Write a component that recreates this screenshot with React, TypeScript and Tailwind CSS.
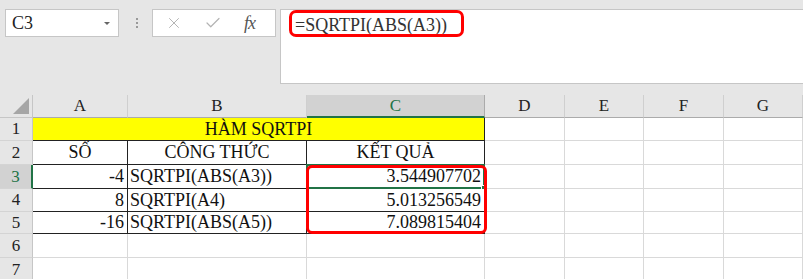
import { X, Check } from "lucide-react";

const cols = [
  { key: "A", w: "w-[95px]" },
  { key: "B", w: "w-[179px]" },
  { key: "C", w: "w-[178px]" },
  { key: "D", w: "w-[80px]" },
  { key: "E", w: "w-[79px]" },
  { key: "F", w: "w-[80px]" },
  { key: "G", w: "w-[79px]" },
];

const rows = [
  { n: 2, h: "h-[24px]", a: "SỐ", b: "CÔNG THỨC", c: "KẾT QUẢ", head: true },
  { n: 3, h: "h-[24px]", a: "-4", b: "SQRTPI(ABS(A3))", c: "3.544907702" },
  { n: 4, h: "h-[23px]", a: "8", b: "SQRTPI(A4)", c: "5.013256549" },
  { n: 5, h: "h-[22px]", a: "-16", b: "SQRTPI(ABS(A5))", c: "7.089815404" },
];

function RowHead({ n, h, active }: { n: number; h: string; active?: boolean }) {
  return (
    <div
      className={`${h} w-[33px] shrink-0 flex items-center justify-center border-b border-[#d4d4d4] text-[17px] ${
        active ? "bg-[#d2d2d2] text-[#217346] border-r-2 border-r-[#217346]" : "border-r border-r-[#c6c6c6] text-[#222]"
      }`}
    >
      {n}
    </div>
  );
}

function Empty({ w, h }: { w: string; h: string }) {
  return <div className={`${w} ${h} shrink-0 bg-white border-r border-b border-[#d9d9d9]`} />;
}

export default function App() {
  return (
    <div
      className="relative w-[803px] h-[279px] overflow-hidden bg-[#e6e6e6] text-[#111]"
      style={{ fontFamily: '"Liberation Serif", "Times New Roman", serif' }}
    >
      {/* formula toolbar */}
      <div className="flex h-[95px] pt-[9px]">
        <div className="ml-[5px] w-[114px] h-[28px] bg-white border border-[#c6c6c6] flex items-center justify-between pl-[6px] pr-[8px]">
          <span className="text-[18px] text-[#222]">C3</span>
          <span className="w-0 h-0 border-l-[3px] border-r-[3px] border-t-[3px] border-l-transparent border-r-transparent border-t-[#666]" />
        </div>
        <div className="ml-[16px] w-[3px] h-[28px] flex flex-col items-center justify-center gap-[2px]">
          <span className="w-[2px] h-[2px] bg-[#999]" />
          <span className="w-[2px] h-[2px] bg-[#999]" />
          <span className="w-[2px] h-[2px] bg-[#999]" />
        </div>
        <div className="ml-[14px] w-[124px] h-[28px] bg-white border border-[#c6c6c6] flex items-center pl-[12px] gap-[21px]">
          <X size={18} strokeWidth={1.3} className="text-[#b3b3b3]" />
          <Check size={18} strokeWidth={1.6} className="text-[#b3b3b3]" />
          <span className="ml-[1px] italic text-[18px] text-[#555] tracking-[-1px]">fx</span>
        </div>
        <div className="ml-[4px] flex-1 h-[75px] bg-white border-t border-b border-l border-[#c6c6c6] pl-[14px] pt-[2px]">
          <span className="text-[18px] text-[#333]">=SQRTPI(ABS(A3))</span>
        </div>
      </div>

      {/* column headers */}
      <div className="flex h-[23px]">
        <div className="w-[33px] h-[23px] shrink-0 border-r border-b border-[#c6c6c6] flex items-end justify-end pr-[3px] pb-[3px]">
          <div className="w-[16px] h-[16px] bg-[#a6a6a6] [clip-path:polygon(100%_0,100%_100%,0_100%)]" />
        </div>
        {cols.map((c) => (
          <div
            key={c.key}
            className={`${c.w} h-[23px] shrink-0 flex items-center justify-center text-[17px] ${
              c.key === "C"
                ? "bg-[#d2d2d2] text-[#217346] border-b-2 border-b-[#217346] border-r border-r-[#ababab]"
                : "border-b border-b-[#ababab] border-r border-r-[#cfcfcf] text-[#222]"
            }`}
          >
            {c.key}
          </div>
        ))}
      </div>

      {/* row 1 */}
      <div className="flex">
        <RowHead n={1} h="h-[23px]" />
        <div className="w-[452px] h-[23px] shrink-0 bg-[#ffff00] border-r border-b border-[#222] flex items-center justify-center text-[18px]">
          HÀM SQRTPI
        </div>
        {cols.slice(3).map((c) => (
          <Empty key={c.key} w={c.w} h="h-[23px]" />
        ))}
      </div>

      {rows.map((r) => (
        <div key={r.n} className="flex">
          <RowHead n={r.n} h={r.h} active={r.n === 3} />
          <div
            className={`w-[95px] ${r.h} shrink-0 bg-white border-r border-b border-[#222] flex items-center text-[18px] ${
              r.head ? "justify-center" : "justify-end pr-[3px]"
            }`}
          >
            {r.a}
          </div>
          <div
            className={`w-[179px] ${r.h} shrink-0 bg-white border-r border-b border-[#222] flex items-center text-[18px] ${
              r.head ? "justify-center" : "pl-[2px]"
            }`}
          >
            {r.b}
          </div>
          <div
            className={`relative w-[178px] ${r.h} shrink-0 bg-white border-r border-b border-[#222] flex items-center text-[18px] ${
              r.head ? "justify-center" : "justify-end pr-[3px]"
            }`}
          >
            {r.c}
            {r.n === 3 && (
              <div className="absolute -left-[1px] -top-[1px] w-[179px] h-[25px] border-2 border-[#217346]">
                <div className="absolute -right-[3px] -bottom-[3px] w-[5px] h-[5px] bg-[#217346] border border-white" />
              </div>
            )}
          </div>
          {cols.slice(3).map((c) => (
            <Empty key={c.key} w={c.w} h={r.h} />
          ))}
        </div>
      ))}

      {[6, 7].map((n) => (
        <div key={n} className="flex">
          <RowHead n={n} h="h-[24px]" />
          {cols.map((c) => (
            <Empty key={c.key} w={c.w} h="h-[24px]" />
          ))}
        </div>
      ))}

      {/* annotation boxes */}
      <div className="absolute left-[289px] top-[10px] w-[175px] h-[27px] border-[3px] border-[#ff0000] rounded-[7px]" />
      <div className="absolute left-[306px] top-[165px] w-[181px] h-[69px] border-[3px] border-[#ff0000] rounded-[6px]" />
    </div>
  );
}
